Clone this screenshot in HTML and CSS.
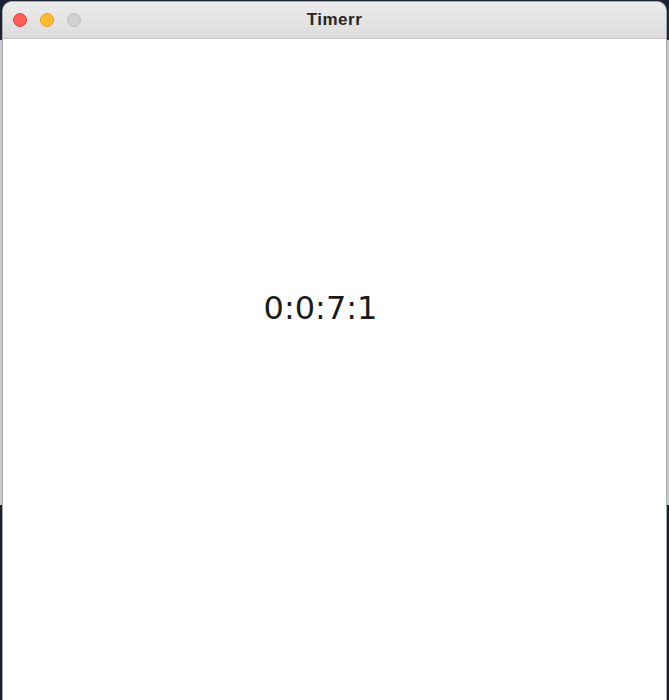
FILE: index.html
```html
<!DOCTYPE html>
<html>
<head>
<meta charset="utf-8">
<title>Timerr</title>
<link rel="stylesheet" href="styles.css">
</head>
<body>
<div class="desktop">
  <div class="window">
    <div class="titlebar">
      <div class="lights">
        <span class="light red"></span>
        <span class="light yellow"></span>
        <span class="light gray"></span>
      </div>
      <div class="title">Timerr</div>
    </div>
    <div class="content">
      <div class="clock">0:0:7:1</div>
    </div>
  </div>
</div>
</body>
</html>
```
FILE: styles.css
```css
html, body {
  margin: 0;
  padding: 0;
  width: 669px;
  height: 700px;
  overflow: hidden;
}
.desktop {
  height: 700px;
  padding: 1px 2px 0 2px;
  box-sizing: border-box;
  background: linear-gradient(to bottom, #1c2431 0, #1c2431 40px, #c9cbcc 40px, #c9cbcc 505px, #1a202b 505px, #1a202b 100%);
}
.window {
  width: 665px;
  height: 699px;
  box-sizing: border-box;
  border: 1px solid #a9a9a9;
  border-bottom: none;
  border-radius: 10px 10px 0 0;
  background: #ffffff;
  overflow: hidden;
  display: flex;
  flex-direction: column;
}
.titlebar {
  height: 36px;
  flex: none;
  display: flex;
  align-items: center;
  position: relative;
  background: linear-gradient(to bottom, #ececec, #dcdcdc);
  border-bottom: 1px solid #c4c4c4;
}
.lights {
  display: flex;
  gap: 13px;
  padding-left: 10px;
}
.light {
  width: 14px;
  height: 14px;
  border-radius: 50%;
  box-sizing: border-box;
}
.red { background: #fc5f57; border: 1px solid #e0443e; }
.yellow { background: #febc2e; border: 1px solid #dea123; }
.gray { background: #d1d1d1; border: 1px solid #bdbdbd; }
.title {
  position: absolute;
  left: 0;
  right: 0;
  top: 8px;
  text-align: center;
  font-family: "Liberation Sans", Arial, sans-serif;
  font-weight: bold;
  font-size: 17px;
  line-height: 20px;
  letter-spacing: 0.5px;
  color: #262626;
  pointer-events: none;
}
.content {
  flex: 1;
  padding-top: 250px;
  padding-right: 28px;
  text-align: center;
}
.clock {
  font-family: "DejaVu Sans", sans-serif;
  font-size: 32px;
  line-height: 38px;
  color: #1b1b1b;
}
```
